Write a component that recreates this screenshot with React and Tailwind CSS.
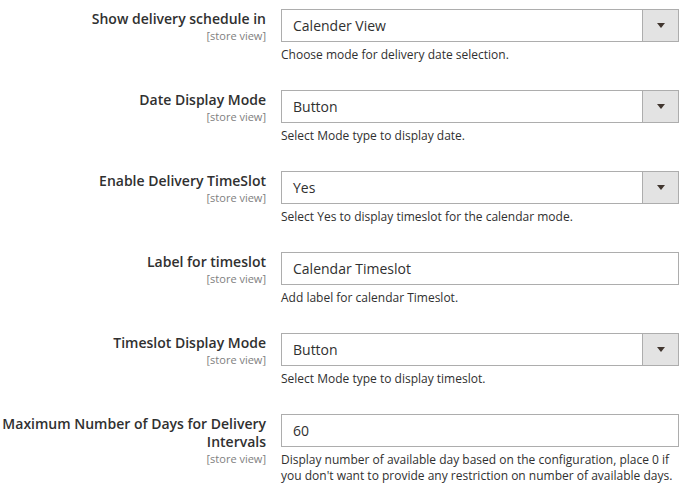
import React from "react";

const Arrow = () => (
  <svg width="8" height="5" viewBox="0 0 8 5" className="block">
    <path d="M0 0 H8 L4 5 Z" fill="#41362f" />
  </svg>
);

function Row({ label, value, note, select }) {
  return (
    <div className="flex">
      <div className="w-[266px] shrink-0 text-right pt-[1px] pl-[2px]">
        <div className="text-[14px] leading-[18px] font-semibold text-[#303030]">
          {label}
        </div>
        <div className="text-[11px] leading-[12px] mt-[2px] text-[#808080]">
          [store view]
        </div>
      </div>
      <div className="ml-[15px] w-[398px]">
        <div className="flex h-[33px] border border-[#adadad] bg-white">
          <div className="flex-1 flex items-center pl-[11px] text-[14px] text-[#303030]">
            {value}
          </div>
          {select && (
            <div className="w-[36px] border-l border-[#adadad] bg-[#e3e3e3] flex items-center justify-center">
              <Arrow />
            </div>
          )}
        </div>
        <div className="mt-[5px] text-[12px] leading-[16px] text-[#303030]">
          {note}
        </div>
      </div>
    </div>
  );
}

export default function App() {
  return (
    <div
      className="w-[684px] h-[489px] bg-white overflow-hidden pt-[9px] flex flex-col gap-[27px]"
      style={{ fontFamily: '"Open Sans", sans-serif' }}
    >
      <Row label="Show delivery schedule in" value="Calender View" note="Choose mode for delivery date selection." select />
      <Row label="Date Display Mode" value="Button" note="Select Mode type to display date." select />
      <Row label="Enable Delivery TimeSlot" value="Yes" note="Select Yes to display timeslot for the calendar mode." select />
      <Row label="Label for timeslot" value="Calendar Timeslot" note="Add label for calendar Timeslot." />
      <Row label="Timeslot Display Mode" value="Button" note="Select Mode type to display timeslot." select />
      <Row
        label="Maximum Number of Days for Delivery Intervals"
        value="60"
        note="Display number of available day based on the configuration, place 0 if you don't want to provide any restriction on number of available days."
      />
    </div>
  );
}
